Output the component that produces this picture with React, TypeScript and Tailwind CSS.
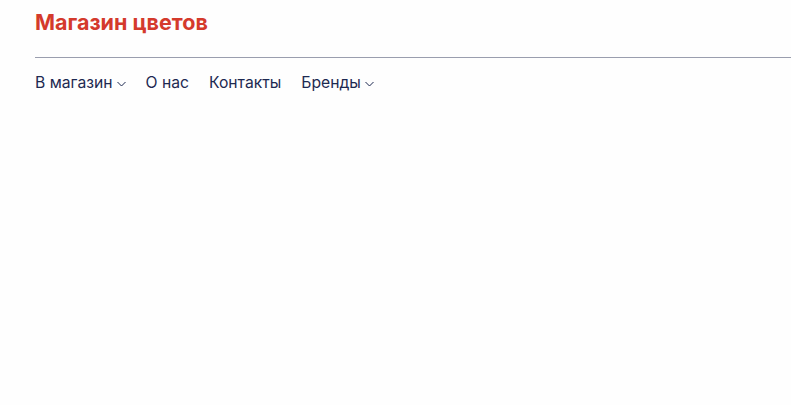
import React from "react";

function Chevron() {
  return (
    <svg width="9" height="6" viewBox="0 0 9 6" fill="none" className="ml-[4px] mt-[2px]">
      <path d="M0.5 1 L4.5 5 L8.5 1" stroke="currentColor" strokeWidth="1" />
    </svg>
  );
}

type NavItemProps = {
  label: string;
  dropdown?: boolean;
};

function NavItem({ label, dropdown }: NavItemProps) {
  return (
    <a href="#" className="flex items-center text-[15.7px] text-[#1d2951]">
      {label}
      {dropdown && <Chevron />}
    </a>
  );
}

export default function App() {
  return (
    <div className="min-h-screen bg-[#fefefe] pl-[35px] font-['Inter',sans-serif]">
      <div className="pt-[9px] text-[21.5px] font-bold leading-[26px] text-[#d43a2c]">Магазин цветов</div>
      <div className="mt-[22px] h-px bg-[#9a9eae]" />
      <nav className="mt-[13px] flex gap-[20px]">
        <NavItem label="В магазин" dropdown />
        <NavItem label="О нас" />
        <NavItem label="Контакты" />
        <NavItem label="Бренды" dropdown />
      </nav>
    </div>
  );
}
